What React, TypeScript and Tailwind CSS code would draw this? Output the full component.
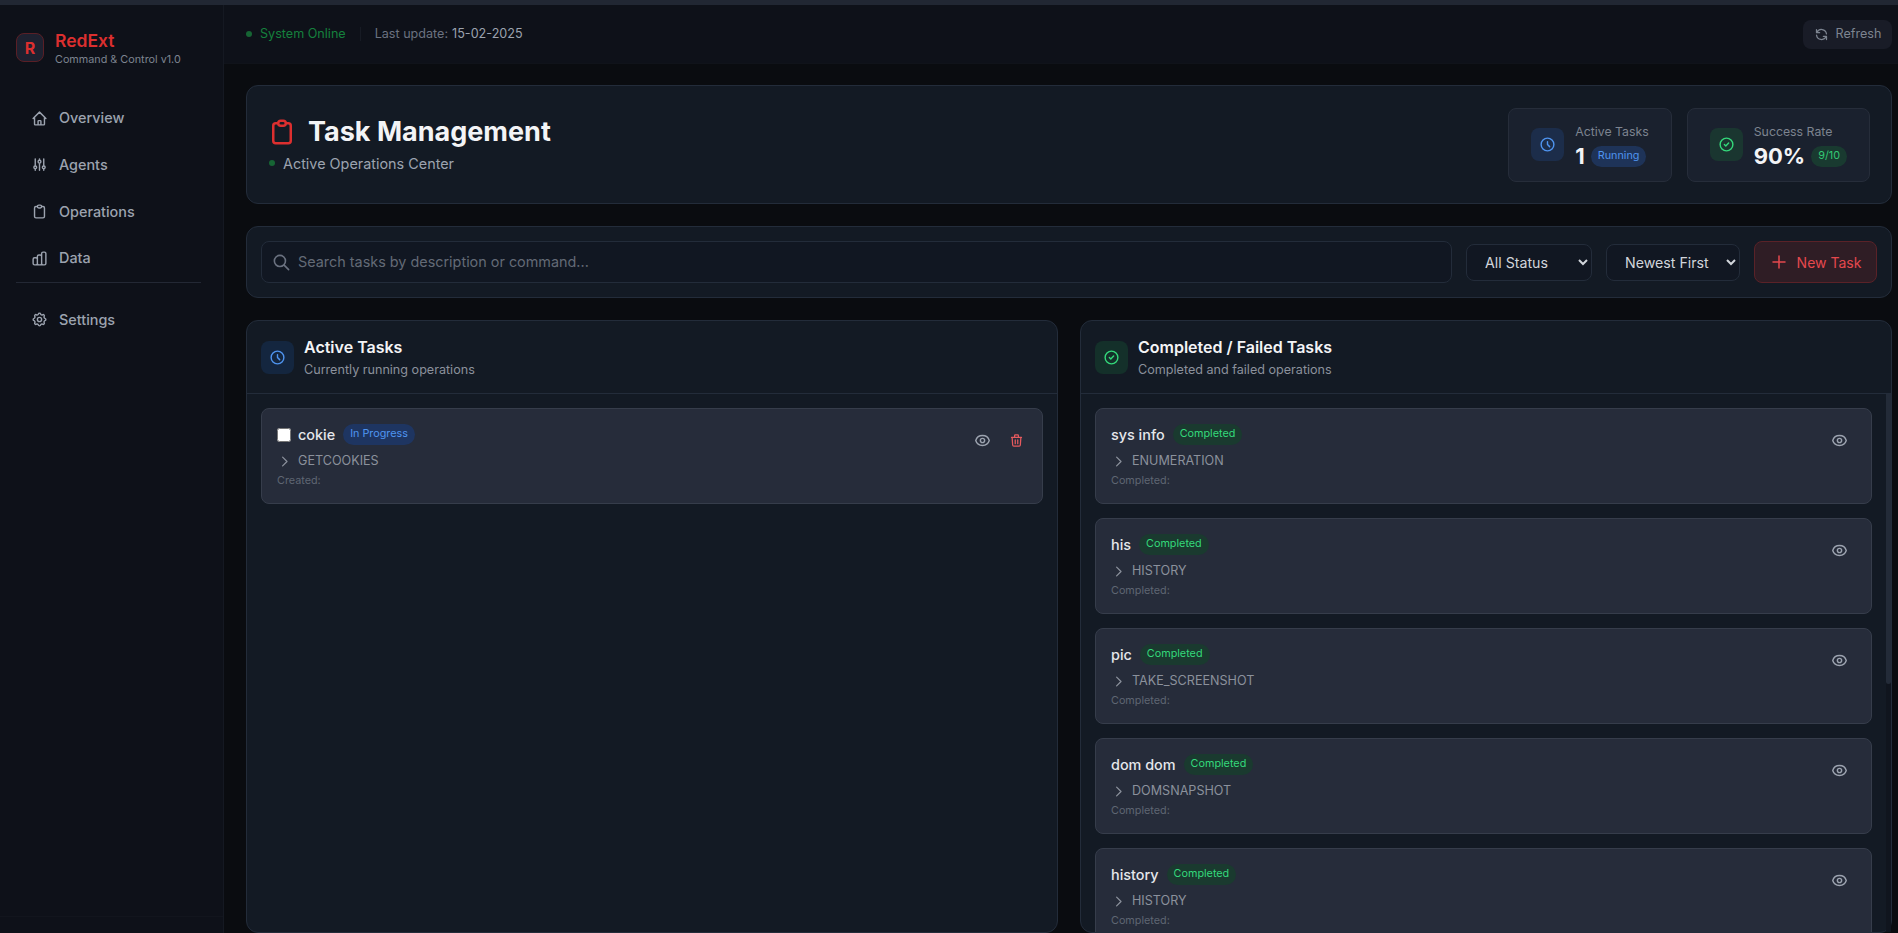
import {
  HiOutlineHome,
  HiOutlineAdjustments,
  HiOutlineClipboard,
  HiOutlineChartBar,
  HiOutlineCog,
  HiOutlineRefresh,
  HiOutlineClock,
  HiOutlineCheckCircle,
  HiOutlineSearch,
  HiOutlinePlus,
  HiOutlineEye,
  HiOutlineTrash,
  HiOutlineChevronRight,
} from 'react-icons/hi';

const NAV = [
  { label: 'Overview', icon: HiOutlineHome },
  { label: 'Agents', icon: HiOutlineAdjustments },
  { label: 'Operations', icon: HiOutlineClipboard },
  { label: 'Data', icon: HiOutlineChartBar },
];

const COMPLETED = [
  { name: 'sys info', command: 'ENUMERATION' },
  { name: 'his', command: 'HISTORY' },
  { name: 'pic', command: 'TAKE_SCREENSHOT' },
  { name: 'dom dom', command: 'DOMSNAPSHOT' },
  { name: 'history', command: 'HISTORY' },
];

function NavItem({ label, icon: Icon }: { label: string; icon: typeof HiOutlineHome }) {
  return (
    <a className="flex h-[46.6px] items-center gap-[11px] px-[15px] text-[14.4px] font-medium text-[#9ca3af]">
      <Icon className="h-[17px] w-[17px] shrink-0" />
      {label}
    </a>
  );
}

function Sidebar() {
  return (
    <aside className="flex w-56 shrink-0 flex-col border-r border-[#151922] bg-[#0e1119]">
      <div className="flex items-center gap-[11px] px-4 pt-[25px]">
        <div className="-mt-[2px] flex h-[29px] w-[28px] items-center justify-center rounded-lg border border-[#5a1f26] bg-[#1e2130] text-[16px] font-bold text-[#dc2f2f]">
          R
        </div>
        <div>
          <div className="text-[17.5px] leading-[22px] font-semibold text-[#dc2f2f]">RedExt</div>
          <div className="text-[10.8px] leading-[15px] text-[#7d8490]">Command &amp; Control v1.0</div>
        </div>
      </div>
      <nav className="mt-[28px] pr-[22px] pl-4">
        {NAV.map((item) => (
          <NavItem key={item.label} {...item} />
        ))}
        <div className="mt-[1px] border-t border-[#232834]" />
        <div className="mt-[13px]">
          <NavItem label="Settings" icon={HiOutlineCog} />
        </div>
      </nav>
      <div className="mt-auto h-[17px] border-t border-[#12151d]" />
    </aside>
  );
}

function Topbar() {
  return (
    <header className="flex h-[59px] shrink-0 items-center justify-between border-b border-[#10131a] bg-[#0e1119] pr-[6px] pl-[22px]">
      <div className="flex items-center text-[12.6px]">
        <span className="h-[6px] w-[6px] rounded-full bg-[#166534]" />
        <span className="ml-2 text-[#15803d]">System Online</span>
        <span className="mx-[14px] h-[14px] w-px bg-[#171b24]" />
        <span className="text-[#6b7280]">Last update:</span>
        <span className="ml-[4px] text-[#9ca3af]">15-02-2025</span>
      </div>
      <button className="flex h-[29px] w-[89px] items-center justify-center gap-[7px] rounded-lg bg-[#191c27] text-[12.6px] text-[#7d8490]">
        <HiOutlineRefresh className="h-[15px] w-[15px]" />
        Refresh
      </button>
    </header>
  );
}

function StatCard({ iconBox, icon, label, value, badge, badgeClass }: {
  iconBox: string;
  icon: React.ReactNode;
  label: string;
  value: string;
  badge: string;
  badgeClass: string;
}) {
  return (
    <div className="flex h-[74px] items-center gap-[11px] rounded-lg border border-[#262d3a] bg-[#1a212e] px-[22px]">
      <div className={`flex h-[33px] w-[33px] items-center justify-center rounded-lg ${iconBox}`}>{icon}</div>
      <div className="pt-[3px]">
        <div className="text-[12.3px] leading-[17px] text-[#7d8490]">{label}</div>
        <div className="mt-[3px] flex h-[26px] items-center gap-[6px]">
          <span className="text-[22px] font-bold text-[#f3f4f6]">{value}</span>
          <span className={`flex h-[21px] items-center rounded-full px-[7px] text-[10.8px] ${badgeClass}`}>{badge}</span>
        </div>
      </div>
    </div>
  );
}

function PageHeader() {
  return (
    <section className="flex h-[119px] shrink-0 items-center justify-between rounded-xl border border-[#232c3a] bg-[#131a24] pr-[21px] pl-[22px]">
      <div>
        <div className="flex items-center gap-[11px]">
          <HiOutlineClipboard className="-ml-[2px] h-[30px] w-[30px] text-[#dc2f2f]" />
          <h1 className="text-[27px] leading-[34px] font-bold text-[#f3f4f6]">Task Management</h1>
        </div>
        <div className="mt-[4px] flex items-center gap-2 text-[14.4px] text-[#9ca3af]">
          <span className="h-[6px] w-[6px] rounded-full bg-[#166534]" />
          Active Operations Center
        </div>
      </div>
      <div className="flex gap-[15px]">
        <StatCard
          iconBox="bg-[#1c2d4a]"
          icon={<HiOutlineClock className="h-[17px] w-[17px] text-[#4f94ef]" />}
          label="Active Tasks"
          value="1"
          badge="Running"
          badgeClass="bg-[#1e3358] text-[#4f94ef]"
        />
        <StatCard
          iconBox="bg-[#1a3630]"
          icon={<HiOutlineCheckCircle className="h-[17px] w-[17px] text-[#34d97b]" />}
          label="Success Rate"
          value="90%"
          badge="9/10"
          badgeClass="bg-[#193a30] text-[#34c874]"
        />
      </div>
    </section>
  );
}

function Toolbar() {
  return (
    <section className="flex h-[72px] shrink-0 items-center gap-[14px] rounded-xl border border-[#232c3a] bg-[#131a24] px-[14px]">
      <div className="flex h-[42px] flex-1 items-center gap-[7px] rounded-lg border border-[#232c3a] bg-[#111722] px-[10px]">
        <HiOutlineSearch className="h-[19px] w-[19px] text-[#6b7280]" />
        <input
          className="flex-1 bg-transparent text-[14.4px] text-white outline-none placeholder:text-[#636a76]"
          placeholder="Search tasks by description or command..."
        />
      </div>
      <select className="mt-[1px] h-[37px] w-[126px] rounded-lg border border-[#232c3a] bg-[#111722] pl-[14px] text-[14.2px] text-[#d1d5db] outline-none">
        <option>All Status</option>
      </select>
      <select className="mt-[1px] h-[37px] w-[134px] rounded-lg border border-[#232c3a] bg-[#111722] pl-[14px] text-[14.2px] text-[#d1d5db] outline-none">
        <option>Newest First</option>
      </select>
      <button className="flex h-[42px] w-[123px] items-center justify-center gap-[9px] rounded-lg border border-[#5a2228] bg-[#2f1d25] text-[14px] text-[#e5484d]">
        <HiOutlinePlus className="h-[18px] w-[18px]" />
        New Task
      </button>
    </section>
  );
}

function TaskCard({ name, command, status, caption, active }: {
  name: string;
  command: string;
  status: string;
  caption: string;
  active?: boolean;
}) {
  return (
    <div className="flex h-[96px] shrink-0 justify-between rounded-lg border border-[#363d4b] bg-[#262c3a] px-[15px] pt-[15px]">
      <div>
        <div className="flex h-[21px] items-center">
          {active && <input type="checkbox" className="mr-[7px] h-[14px] w-[14px]" />}
          <span className="text-[14.4px] font-medium text-[#e5e7eb]">{name}</span>
          <span
            className={`ml-[8px] flex h-[21px] items-center rounded-full px-[7px] pb-[1px] text-[10.8px] ${
              active ? 'bg-[#1e3561] text-[#4f94ef]' : 'bg-[#1a3a2f] text-[#34d97b]'
            }`}
          >
            {status}
          </span>
        </div>
        <div className="mt-[8px] flex h-[16px] items-center text-[12.6px] text-[#8b919c]">
          <HiOutlineChevronRight className="mr-[6px] h-[15px] w-[15px]" />
          {command}
        </div>
        <div className="mt-[4px] text-[10.8px] leading-[15px] text-[#5f6673]">{caption}</div>
      </div>
      <div className={`flex items-start gap-[18px] pt-[8px] ${active ? 'pr-[3px]' : 'pr-[8px]'}`}>
        <HiOutlineEye className="h-[17px] w-[17px] text-[#9ca3af]" />
        {active && <HiOutlineTrash className="mt-[1px] h-[15px] w-[15px] text-[#e65a5e]" />}
      </div>
    </div>
  );
}

function PanelHeader({ iconBox, icon, title, subtitle }: {
  iconBox: string;
  icon: React.ReactNode;
  title: string;
  subtitle: string;
}) {
  return (
    <div className="flex h-[73px] shrink-0 items-center gap-[10px] border-b border-[#232c3a] px-[14px]">
      <div className={`flex h-[33px] w-[33px] items-center justify-center rounded-lg ${iconBox}`}>{icon}</div>
      <div className="pt-[1px]">
        <div className="text-[16px] leading-[24px] font-semibold text-[#f3f4f6]">{title}</div>
        <div className="mt-[1px] text-[12.6px] leading-[20px] text-[#8b919c]">{subtitle}</div>
      </div>
    </div>
  );
}

export default function App() {
  return (
    <div className="flex h-screen flex-col overflow-hidden bg-[#0a0c10] font-['Inter',sans-serif]">
      <div className="h-[5px] shrink-0 bg-[#212733]" />
      <div className="flex min-h-0 flex-1">
        <Sidebar />
        <div className="flex min-w-0 flex-1 flex-col">
          <Topbar />
          <main className="flex min-h-0 flex-1 flex-col gap-[22px] pt-[21px] pr-[6px] pl-[22px]">
            <PageHeader />
            <Toolbar />
            <div className="grid min-h-0 flex-1 grid-cols-2 gap-[22px]">
              <section className="flex min-h-0 flex-col rounded-xl border border-[#232c3a] bg-[#131a24]">
                <PanelHeader
                  iconBox="bg-[#14263f]"
                  icon={<HiOutlineClock className="h-[17px] w-[17px] text-[#4f94ef]" />}
                  title="Active Tasks"
                  subtitle="Currently running operations"
                />
                <div className="p-[14px]">
                  <TaskCard name="cokie" command="GETCOOKIES" status="In Progress" caption="Created:" active />
                </div>
              </section>
              <section className="flex min-h-0 flex-col rounded-xl border border-[#232c3a] bg-[#131a24]">
                <PanelHeader
                  iconBox="bg-[#14302a]"
                  icon={<HiOutlineCheckCircle className="h-[17px] w-[17px] text-[#34d97b]" />}
                  title="Completed / Failed Tasks"
                  subtitle="Completed and failed operations"
                />
                <div className="relative min-h-0 flex-1 overflow-hidden">
                  <div className="flex flex-col gap-[14px] p-[14px] pr-[19px]">
                    {COMPLETED.map((task) => (
                      <TaskCard key={task.name} name={task.name} command={task.command} status="Completed" caption="Completed:" />
                    ))}
                  </div>
                  {/* scrollbar */}
                  <div className="absolute top-0 right-0 bottom-0 w-[5px] bg-[#10151e]">
                    <div className="h-[290px] rounded-b-[3px] bg-[#232b38]" />
                  </div>
                </div>
              </section>
            </div>
          </main>
        </div>
      </div>
    </div>
  );
}
